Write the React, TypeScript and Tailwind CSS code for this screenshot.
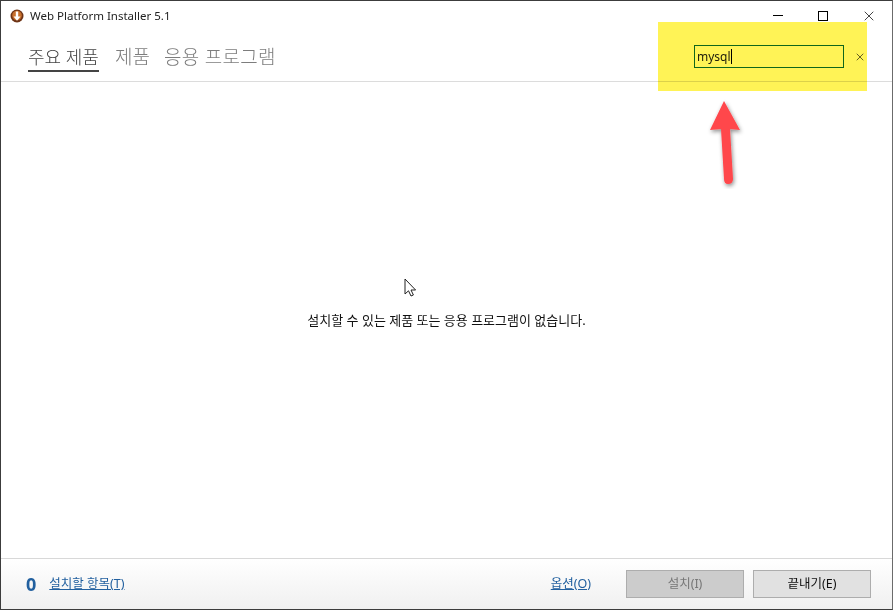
import React from "react";
import { X } from "lucide-react";

const font = { fontFamily: '"Noto Sans", "Noto Sans CJK KR", sans-serif' };

const App: React.FC = () => {
  return (
    <div
      className="relative flex h-[610px] w-[893px] flex-col overflow-hidden border border-[#3c3c3c] border-r-[#6b6b6b] bg-white"
      style={font}
    >
      {/* title bar */}
      <div className="flex h-[29px] shrink-0 items-center pl-[9px]">
        <svg width="14" height="14" viewBox="0 0 14 14">
          <circle cx="7" cy="7" r="6.5" fill="#6e3416" />
          <circle cx="7" cy="6.5" r="4.8" fill="#c9702c" />
          <path d="M5.8 2.5h2.4v5h2.3L7 11.8 3.5 7.5h2.3z" fill="#fff" />
        </svg>
        <span className="ml-[6px] text-[11.5px] leading-none text-[#222]">
          Web Platform Installer 5.1
        </span>
        <div className="ml-auto flex items-center">
          <div className="h-[1px] w-[10px] bg-black" />
          <div className="ml-[35px] h-[10px] w-[10px] border border-black" />
          <X className="mr-[15px] ml-[33px] h-[16px] w-[16px] text-black" strokeWidth={1.1} />
        </div>
      </div>

      {/* tabs + search */}
      <div className="flex h-[52px] shrink-0 items-start border-b border-[#dcdcdc] pl-[27px]">
        <div className="mt-[14px] flex items-start gap-[16px] text-[19px] leading-[26px] font-light text-[#7d7d7d]">
          <span className="border-b-2 border-[#444] text-[18px] text-[#444]">주요 제품</span>
          <span>제품</span>
          <span className="-ml-[2px] tracking-[0.3px]">응용 프로그램</span>
        </div>
        <div className="ml-auto flex items-center pt-[15px] pr-[26px]">
          <div className="flex h-[23px] w-[150px] items-center border border-[#0f6b4f] pl-[2px] text-[12px] text-[#222]">
            mysql
            <span className="h-[15px] w-[1px] bg-black" />
          </div>
          <X className="ml-[10px] h-[12px] w-[12px] text-[#555]" strokeWidth={1.8} />
        </div>
      </div>

      {/* body */}
      <div className="flex flex-1 items-center justify-center pt-[1px]">
        <p className="text-[13px] leading-none text-[#111]">
          설치할 수 있는 제품 또는 응용 프로그램이 없습니다.
        </p>
      </div>

      {/* footer */}
      <div className="flex h-[51px] shrink-0 items-center border-t border-[#d8d8d8] bg-gradient-to-b from-white to-[#f0f0f0] pr-[21px] pl-[25px]">
        <span className="text-[18px] leading-none font-bold text-[#22609f]">0</span>
        <a className="ml-[13px] text-[12.5px] text-[#22609f] underline">설치할 항목(T)</a>
        <a className="mr-[35px] ml-auto text-[12.5px] text-[#22609f] underline">옵션(O)</a>
        <div className="flex h-[28px] w-[118px] items-center justify-center border border-[#adadad] bg-[#cccccc] text-[12.5px] text-[#777]">
          설치(I)
        </div>
        <div className="ml-[9px] flex h-[28px] w-[118px] items-center justify-center border border-[#adadad] bg-[#e1e1e1] text-[12.5px] text-[#111]">
          끝내기(E)
        </div>
      </div>

      {/* mouse cursor in the capture */}
      <svg className="absolute top-[277px] left-[403px]" width="14" height="20" viewBox="0 0 14 20">
        <path d="M1 1v15l3.5-3.2L7 18l2.4-1-2.4-5h4.6z" fill="#fff" stroke="#222" strokeWidth="1" />
      </svg>

      {/* yellow highlight annotation */}
      <div className="pointer-events-none absolute top-[21px] left-[657px] h-[69px] w-[209px] bg-[#fff356] mix-blend-multiply" />

      {/* red arrow annotation */}
      <svg className="absolute top-[98px] left-[705px]" width="40" height="90" viewBox="0 0 40 90">
        <defs>
          <filter id="arrowShadow" x="-30%" y="-30%" width="160%" height="160%">
            <feDropShadow dx="1" dy="2" stdDeviation="2" floodColor="#000" floodOpacity="0.45" />
          </filter>
        </defs>
        <path
          d="M18 2 L34 31 L24 30 L27 80 Q27 85 22 85 Q18 85 18 80 L15 30 L4 31 Z"
          fill="#ff464b"
          filter="url(#arrowShadow)"
        />
      </svg>
    </div>
  );
};

export default App;
